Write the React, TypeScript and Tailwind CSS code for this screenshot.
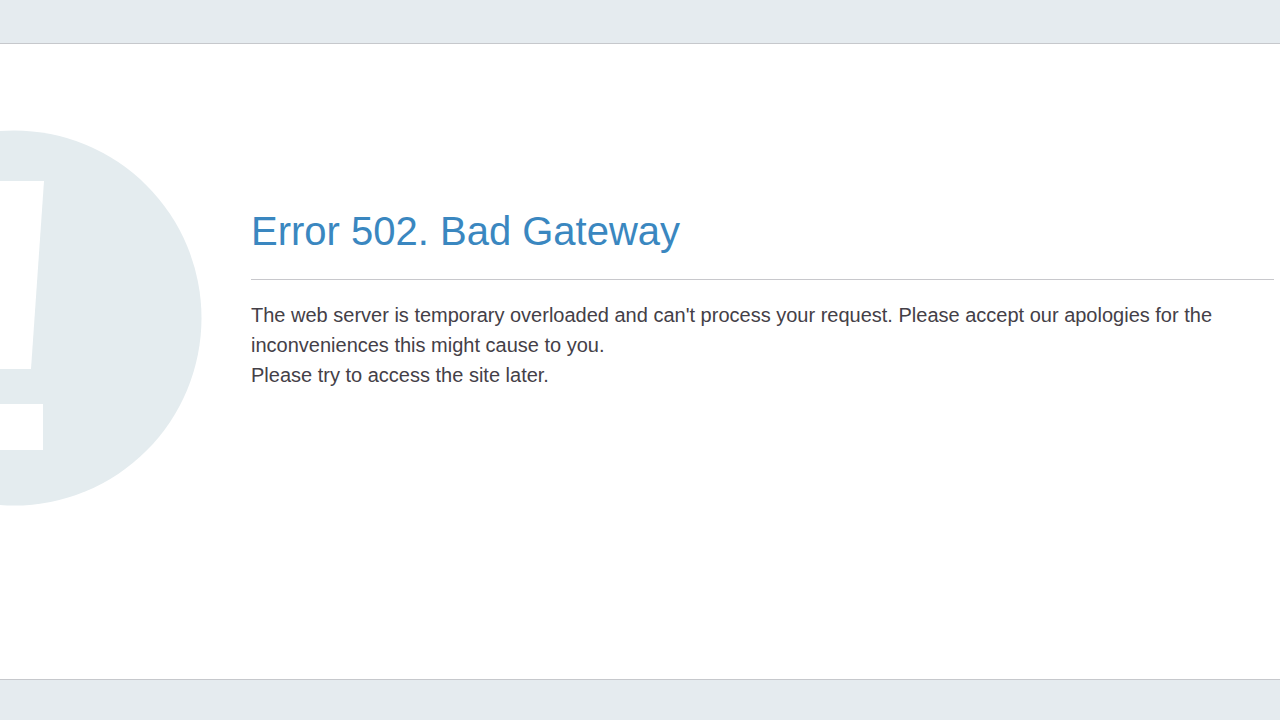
export default function App() {
  return (
    <div className="flex min-h-screen flex-col overflow-hidden bg-[#e5ebef] font-['Liberation_Sans',Arial,sans-serif]">
      <main className="my-10 mt-[43px] flex flex-1 items-start overflow-hidden border-y border-[#c6c8cc] bg-white">
        <svg
          viewBox="0 0 376 376"
          role="img"
          aria-label="Warning"
          className="mt-[86px] -ml-[174px] size-[376px] shrink-0"
        >
          <circle cx="188" cy="188" r="187.5" fill="#e4ecef" />
          <path d="M156 51H218L205 239H169Z" fill="#fff" />
          <path d="M157 274H217V320H157Z" fill="#fff" />
        </svg>
        <div className="mt-40 mr-1.5 ml-[49px] min-w-0 flex-1">
          <h1 className="border-b border-[#c8c8cc] pb-[21px] text-[40px] leading-[54px] text-[#3a87c0]">
            Error 502. Bad Gateway
          </h1>
          <div className="mt-5 text-[20px] leading-[30px] text-[#444047]">
            <p>
              The web server is temporary overloaded and can&apos;t process your request. Please accept our apologies
              for the inconveniences this might cause to you.
            </p>
            <p>Please try to access the site later.</p>
          </div>
        </div>
      </main>
    </div>
  );
}
